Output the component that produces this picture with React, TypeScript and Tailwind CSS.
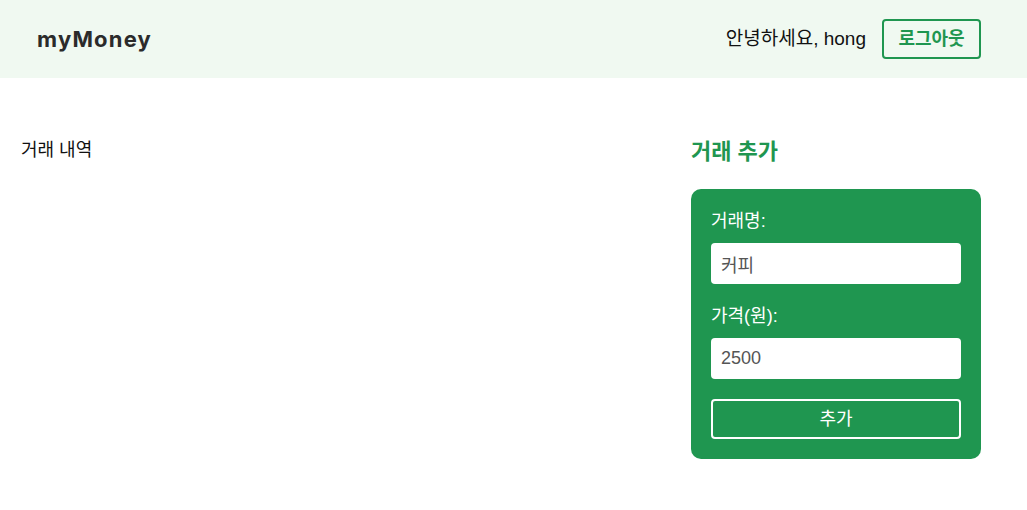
import React, { useState } from 'react';

const App: React.FC = () => {
  const [name, setName] = useState('커피');
  const [price, setPrice] = useState('2500');

  return (
    <div className="min-h-screen bg-white text-[#111] font-['Liberation_Sans','Noto_Sans_CJK_KR',sans-serif]">
      {/* Header */}
      <header className="h-[78px] bg-[#f0f9f1] flex items-center justify-between pl-[37px] pr-[46px]">
        <h1 className="text-[22px] font-bold tracking-[1.2px] text-[#2b2b2b] font-['Inter','Noto_Sans_CJK_KR',sans-serif]">
          myMoney
        </h1>
        <div className="flex items-center gap-4">
          <span className="text-[19px] text-[#111]">안녕하세요, hong</span>
          <button className="h-[40px] w-[99px] rounded-[4px] border-2 border-[#1f9650] text-[#1f9650] text-[18px] font-bold bg-transparent">
            로그아웃
          </button>
        </div>
      </header>

      {/* Main */}
      <main className="flex justify-between items-start pl-[21px] pr-[46px] pt-[59px]">
        <section>
          <h2 className="text-[18px] leading-[27px]">거래 내역</h2>
        </section>

        <section className="w-[290px]">
          <h2 className="text-[22px] leading-[30px] font-bold text-[#1f9650]">거래 추가</h2>
          <form
            className="mt-[22px] bg-[#1f9650] rounded-[10px] p-5 pt-[19px] flex flex-col"
            onSubmit={(e) => e.preventDefault()}
          >
            <label className="text-white text-[18px] leading-[27px]">거래명:</label>
            <input
              value={name}
              onChange={(e) => setName(e.target.value)}
              className="mt-[8px] h-[41px] w-full rounded-[4px] bg-white px-[10px] text-[18px] text-[#555] outline-none"
            />
            <label className="mt-[19px] text-white text-[18px] leading-[27px]">가격(원):</label>
            <input
              value={price}
              onChange={(e) => setPrice(e.target.value)}
              className="mt-[8px] h-[41px] w-full rounded-[4px] bg-white px-[10px] text-[18px] text-[#555] outline-none"
            />
            <button
              type="submit"
              className="mt-[20px] h-[40px] w-full rounded-[4px] border-2 border-white text-white text-[18px] bg-transparent"
            >
              추가
            </button>
          </form>
        </section>
      </main>
    </div>
  );
};

export default App;
